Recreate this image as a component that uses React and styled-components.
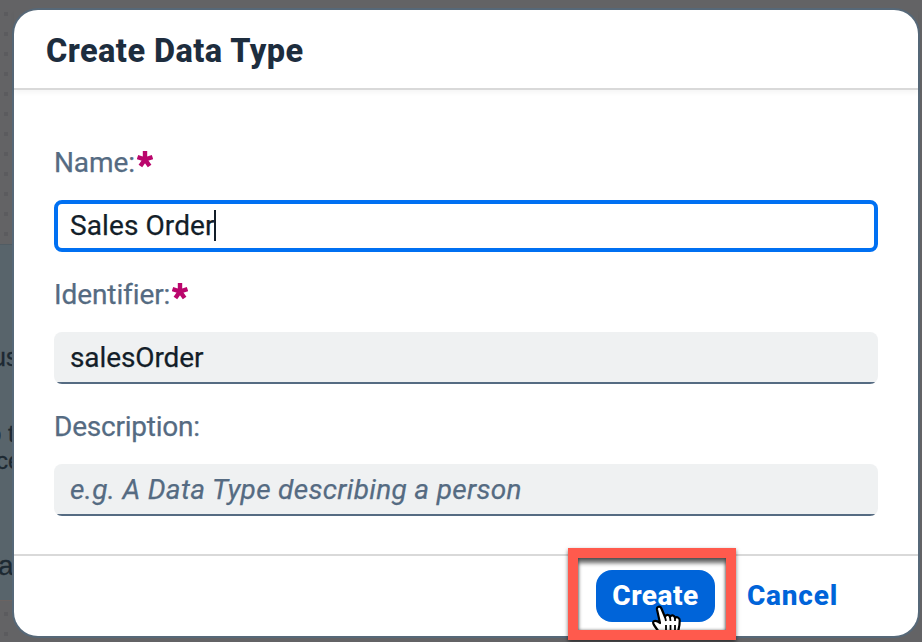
import React from "react";
import styled, { createGlobalStyle, css } from "styled-components";

const GlobalStyle = createGlobalStyle`
  * { box-sizing: border-box; }
  body { margin: 0; overflow: hidden; font-family: Roboto, "Liberation Sans", sans-serif; }
`;

const Screen = styled.div`
  position: relative;
  width: 922px;
  height: 642px;
  padding: 10px 4px 6px 14px;
  background: #636366;
  overflow: hidden;
`;

const Canvas = styled.div`
  position: absolute;
  inset: 0;
  background: #636365;
`;

const DotColumn = styled.div`
  position: absolute;
  left: 4px;
  top: 12px;
  width: 4px;
  height: 630px;
  background: repeating-linear-gradient(#5b5b5e 0 4px, transparent 4px 20px);
`;

const CanvasCard = styled.div`
  position: absolute;
  left: 0;
  top: 244px;
  width: 14px;
  height: 356px;
  background: #58646b;
  border-top: 1px solid #515c63;
  box-shadow: 0 1px 0 #6b6361;
`;

const CanvasText = styled.span`
  position: absolute;
  top: ${(p) => p.$top}px;
  left: ${(p) => p.$left}px;
  color: #1d2932;
  font: ${(p) => p.$size}px/28px "Liberation Sans", Arial, sans-serif;
  -webkit-text-stroke: 0.3px currentColor;
  white-space: nowrap;
`;

const Dialog = styled.section`
  position: relative;
  display: flex;
  flex-direction: column;
  width: 904px;
  height: 626px;
  border-radius: 24px;
  background: #fff;
  box-shadow: 0 0 0 2px #566878;
`;

const Header = styled.header`
  display: flex;
  align-items: center;
  height: 80px;
  padding: 0 32px;
  border-bottom: 2px solid #d9d9d9;
  box-shadow: 0 3px 5px rgba(0, 0, 0, 0.04);
`;

const Title = styled.h1`
  margin: 4px 0 0;
  color: #1d2d3e;
  font-size: 32.5px;
  line-height: 40px;
  font-weight: 800;
  letter-spacing: ${(p) => p.$track}px;
`;

const Form = styled.form`
  display: flex;
  flex-direction: column;
  flex: 1;
  padding: 44px 40px 0;
`;

const Field = styled.div`
  display: flex;
  flex-direction: column;
  height: 132px;
`;

const Label = styled.label`
  display: flex;
  height: 66px;
  padding-top: 9px;
  color: #556b82;
  font-size: 28px;
  line-height: 40px;
  letter-spacing: ${(p) => p.$track}px;
  -webkit-text-stroke: 0.25px currentColor;
`;

const Star = styled.svg`
  width: 16px;
  height: 17px;
  margin: 8px 0 0 2px;
  stroke: #ba066c;
  stroke-width: 4.4;
  fill: none;
`;

const Input = styled.div`
  display: flex;
  align-items: center;
  height: 52px;
  padding: 0 16px;
  border-radius: 8px;
  color: #131e29;
  background: linear-gradient(#556b82, #556b82) center bottom / calc(100% - 6px) 2px no-repeat #eff1f2;
  font-size: 28px;
  line-height: 36px;
  letter-spacing: ${(p) => p.$track}px;
  -webkit-text-stroke: 0.25px currentColor;
  ${(p) => p.$focused && css`
    padding: 0 12px;
    border: 4px solid #0070f2;
    background: #fff;
  `}
  ${(p) => p.$placeholder && css`
    color: #556b82;
    font-style: italic;
  `}
`;

const Caret = styled.i`
  width: 2px;
  height: 31px;
  margin: 0 0 1px -1px;
  background: #131e29;
`;

const Footer = styled.footer`
  display: flex;
  justify-content: flex-end;
  gap: 16px;
  height: 82px;
  padding: 14px 64px 0 0;
  border-top: 2px solid #d9d9d9;
`;

const Button = styled.button`
  width: ${(p) => p.$width}px;
  height: 52px;
  padding: 0;
  border: 0;
  border-radius: 16px;
  color: ${(p) => (p.$primary ? "#fff" : "#0064d9")};
  background: ${(p) => (p.$primary ? "#0064d9" : "transparent")};
  font: 800 28px/52px Roboto, "Liberation Sans", sans-serif;
  letter-spacing: ${(p) => p.$track}px;
  white-space: nowrap;
`;

const Pointer = styled.svg`
  position: absolute;
  left: 651px;
  top: 605px;
  width: 34px;
  height: 36px;
`;

const Highlight = styled.div`
  position: absolute;
  left: 568px;
  top: 548px;
  width: 168px;
  height: 92px;
  border: 10px solid #ff5a4d;
  box-shadow: 0 2px 4px rgba(0, 0, 0, 0.55), inset 0 5px 4px rgba(0, 0, 0, 0.6), inset 0 0 3px rgba(0, 0, 0, 0.5);
`;

const Required = () => (
  <Star viewBox="0 0 16 17" aria-label="required">
    <path d="M8 8.5V0M8 8.5L0.5 6M8 8.5L15.5 6M8 8.5L3.4 15M8 8.5L12.6 15" />
  </Star>
);

export default function App() {
  return (
    <Screen>
      <GlobalStyle />
      <Canvas>
        <DotColumn />
        <CanvasCard>
          <CanvasText $top={98} $left={-8} $size={25}>us</CanvasText>
          <CanvasText $top={175} $left={-12} $size={24}>o t</CanvasText>
          <CanvasText $top={202} $left={-4} $size={24}>ce</CanvasText>
          <CanvasText $top={307} $left={-2} $size={28}>a</CanvasText>
        </CanvasCard>
      </Canvas>
      <Dialog>
        <Header><Title $track={0.45}>Create Data Type</Title></Header>
        <Form>
          <Field>
            <Label $track={-0.1}>Name:<Required /></Label>
            <Input $focused $track={0.1}>Sales Order<Caret /></Input>
          </Field>
          <Field>
            <Label $track={-0.1}>Identifier:<Required /></Label>
            <Input $track={-0.1}>salesOrder</Input>
          </Field>
          <Field>
            <Label $track={-0.23}>Description:</Label>
            <Input $placeholder $track={0.32}>e.g. A Data Type describing a person</Input>
          </Field>
        </Form>
        <Footer>
          <Button $primary $width={119} $track={0.5}>Create</Button>
          <Button $width={123} $track={0.8}>Cancel</Button>
        </Footer>
      </Dialog>
      <Pointer viewBox="0 0 34 36">
        <path
          d="M9 18L6 4.5C5.4 1.4 9.2.6 10.3 3.2L14 12C15 9 18.4 9.4 19 12C20.2 9.4 23.5 10 24 13C25.7 11.2 29 12.8 28.7 16C28.7 21 28 26 24 33H12L3 20C.3 15.6 4.5 14.4 9 18Z"
          fill="#fff" stroke="#000" strokeWidth="2.2" strokeLinejoin="round"
        />
        <path d="M14 12L15 16M19 12L19.5 16M24 13V16M15 20V28M19.5 20V28M24 20V28" stroke="#000" strokeWidth="1.8" />
      </Pointer>
      <Highlight />
    </Screen>
  );
}
